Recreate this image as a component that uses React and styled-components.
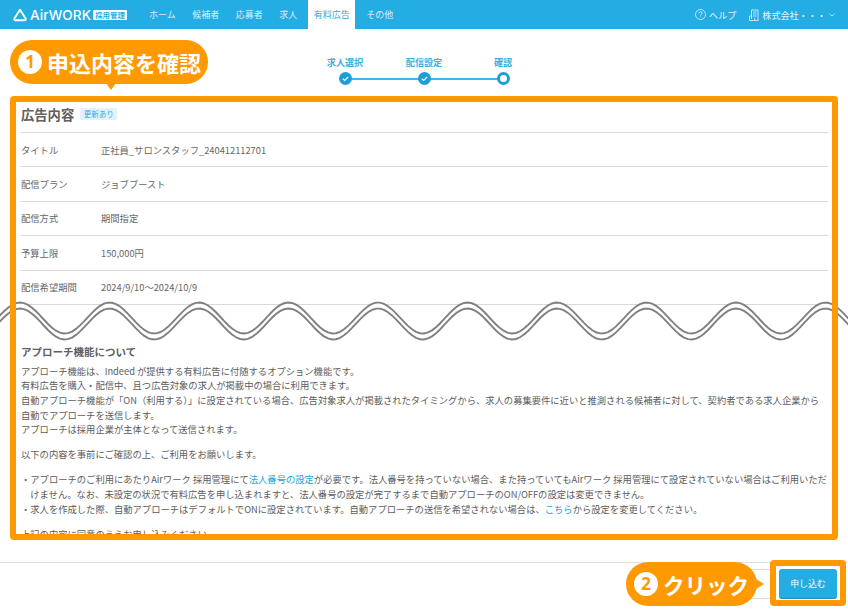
import React from "react";
import styled, { createGlobalStyle } from "styled-components";

const Global = createGlobalStyle`
  html, body { margin: 0; padding: 0; background: #fff; }
  * { box-sizing: border-box; }
  body { font-family: "Noto Sans CJK JP", "Noto Sans", sans-serif; color: #555; }
`;

const Page = styled.div`
  position: relative;
  width: 848px;
  height: 612px;
  overflow: hidden;
  display: flex;
  flex-direction: column;
  background: #fff;
`;

const Header = styled.header`
  height: 29px;
  flex: none;
  display: flex;
  align-items: stretch;
  background: #24ade3;
  color: #fff;
  font-size: 9px;
  padding: 0 13px;
`;
const Logo = styled.div`
  display: flex;
  align-items: center;
  gap: 3px;
  width: 130.5px;
`;
const LogoText = styled.span`
  font-family: Inter, "Liberation Sans", sans-serif;
  font-size: 13.6px;
  font-weight: 500;
  letter-spacing: 0.1px;
  width: 60px;
`;
const LogoBadge = styled.span`
  width: 34px;
  height: 10px;
  background: #fff;
  color: #24ade3;
  font-size: 7.4px;
  font-weight: 700;
  line-height: 10px;
  text-align: center;
  border-radius: 1px;
`;
const Nav = styled.nav`
  display: flex;
  gap: 5.5px;
`;
const NavItem = styled.a`
  display: flex;
  align-items: center;
  padding: 0 5.5px;
  background: ${(p) => (p.$active ? "#fff" : "transparent")};
  color: ${(p) => (p.$active ? "#24ade3" : "rgba(255,255,255,.82)")};
`;
const HeaderRight = styled.div`
  margin-left: auto;
  display: flex;
  align-items: center;
  font-size: 9.1px;
  color: rgba(255, 255, 255, 0.9);
`;
const HeaderLink = styled.span`
  display: flex;
  align-items: center;
  gap: 3px;
  margin-left: ${(p) => p.$gap || 0}px;
`;

const StepBar = styled.div`
  height: 67px;
  flex: none;
  display: flex;
  justify-content: center;
  align-items: flex-start;
  padding-top: 27px;
`;
const Step = styled.div`
  position: relative;
  width: 79px;
  display: flex;
  flex-direction: column;
  align-items: center;
  gap: 3px;
  &:not(:last-child)::after {
    content: "";
    position: absolute;
    left: 50%;
    width: 100%;
    bottom: 5.5px;
    height: 2px;
    background: #41b6e6;
  }
`;
const StepLabel = styled.span`
  font-size: 9.1px;
  line-height: 13px;
  font-weight: 700;
  color: #37b1e4;
`;
const StepDot = styled.span`
  position: relative;
  z-index: 1;
  width: 13px;
  height: 13px;
  border-radius: 50%;
  display: flex;
  align-items: center;
  justify-content: center;
  background: ${(p) => (p.$current ? "#fff" : "#1c9fd6")};
  border: ${(p) => (p.$current ? "3px solid #1c9fd6" : "none")};
`;

const Scroll = styled.main`
  height: 442px;
  flex: none;
  overflow: hidden;
`;
const Section = styled.section`
  padding: 0 20px 0 21px;
`;
const TitleRow = styled.div`
  height: 37px;
  display: flex;
  align-items: center;
  gap: 6px;
  border-bottom: 1px solid #d9d9d9;
`;
const Title = styled.h2`
  margin: 0;
  font-size: 13.3px;
  font-weight: 700;
  color: #606060;
`;
const UpdateTag = styled.span`
  height: 12px;
  padding: 0 3.5px;
  background: #e1f2fb;
  border-radius: 2px;
  color: #37a9dd;
  font-size: 7.5px;
  line-height: 12px;
`;
const Row = styled.div`
  height: 34.4px;
  display: flex;
  align-items: center;
  border-bottom: 1px solid #d9d9d9;
  font-size: 9.3px;
  color: #666;
`;
const RowLabel = styled.span`
  width: 80px;
  flex: none;
`;
const WaveBreak = styled.div`
  height: 43px;
  margin-top: -5px;
  position: relative;
`;
const WaveSvg = styled.svg`
  display: block;
`;
const Body = styled.div`
  padding: 0 20px 0 21px;
  font-size: 9.3px;
  line-height: 14.6px;
  color: #5c5c5c;
`;
const BodyTitle = styled.h3`
  margin: 1px 0 3.8px;
  font-size: 10.5px;
  line-height: 16px;
  font-weight: 700;
  color: #606060;
`;
const Para = styled.p`
  margin: 0 0 ${(p) => (p.$gap ? 10.5 : 0)}px;
`;
const BulletList = styled.div`
  margin-bottom: 11px;
`;
const Bullet = styled.p`
  margin: 0;
  padding-left: 9.3px;
  text-indent: -9.3px;
`;
const TextLink = styled.a`
  color: #1d9fd8;
`;

const Footer = styled.footer`
  margin-top: 24px;
  height: 50px;
  flex: none;
  border-top: 1px solid #e0e0e0;
  display: flex;
  justify-content: flex-end;
  align-items: center;
  padding: 0 11px 8px 0;
  gap: 8px;
`;
const GhostButton = styled.button`
  width: 58px;
  height: 30px;
  background: #fff;
  border: 1px solid #ddd;
  border-radius: 2px;
`;
const ApplyButton = styled.button`
  width: 58px;
  height: 30px;
  padding: 0;
  background: #24ade3;
  border: none;
  border-bottom: 1px solid #1a8fc0;
  border-radius: 3px;
  color: #fff;
  font: 400 8.9px "Noto Sans CJK JP", sans-serif;
`;

const Frame = styled.div`
  position: absolute;
  left: 10px;
  top: 96px;
  width: 828px;
  height: 444px;
  border: 6px solid #ff9900;
  border-radius: 4px;
  pointer-events: none;
`;
const ButtonFrame = styled.div`
  position: absolute;
  left: 770px;
  top: 560px;
  width: 76px;
  height: 46px;
  border: 6px solid #ff9900;
  border-radius: 4px;
  pointer-events: none;
`;
const Callout = styled.div`
  position: absolute;
  display: flex;
  align-items: center;
  height: 44px;
  border-radius: 22px;
  background: #ff9900;
  color: #fff;
  font-weight: 700;
  padding-left: 8px;
  left: ${(p) => p.$x}px;
  top: ${(p) => p.$y}px;
  width: ${(p) => p.$w}px;
`;
const CalloutTailDown = styled.span`
  position: absolute;
  left: 96px;
  bottom: -6px;
  border-left: 5px solid transparent;
  border-right: 5px solid transparent;
  border-top: 7px solid #ff9900;
`;
const CalloutTailRight = styled.span`
  position: absolute;
  right: -7px;
  top: 17px;
  border-top: 5px solid transparent;
  border-bottom: 5px solid transparent;
  border-left: 8px solid #ff9900;
`;
const CalloutNum = styled.span`
  width: 24px;
  height: 24px;
  flex: none;
  border-radius: 50%;
  background: #fff;
  color: #ff9900;
  font: 700 17px/24px "Noto Sans", sans-serif;
  text-align: center;
`;
const CalloutText = styled.span`
  font-size: ${(p) => p.$size}px;
  margin-left: 5px;
  white-space: nowrap;
`;

const wave = (offset) => {
  const pts = [];
  for (let x = -4; x <= 852; x += 4) {
    const y = 18 - 15.5 * Math.cos(((x - 20) * 2 * Math.PI) / 89.5) + offset;
    pts.push([x, y.toFixed(2)]);
  }
  return pts;
};
const toPath = (pts) => pts.map((p, i) => `${i ? "L" : "M"}${p[0]} ${p[1]}`).join(" ");
const top = wave(0);
const bottom = wave(6);
const bandPath = `${toPath(top)} ${toPath([...bottom].reverse()).replace("M", "L")} Z`;

const Check = () => (
  <svg width="9" height="9" viewBox="0 0 9 9" fill="none">
    <path d="M1.8 4.7 L3.7 6.4 L7.2 2.8" stroke="#fff" strokeWidth="1.2" />
  </svg>
);

const Steps = [
  ["求人選択", false],
  ["配信設定", false],
  ["確認", true],
];
const Rows = [
  ["タイトル", "正社員_サロンスタッフ_240412112701"],
  ["配信プラン", "ジョブブースト"],
  ["配信方式", "期間指定"],
  ["予算上限", "150,000円"],
  ["配信希望期間", "2024/9/10〜2024/10/9"],
];
const NavItems = ["ホーム", "候補者", "応募者", "求人", "有料広告", "その他"];

export default function App() {
  return (
    <Page>
      <Global />
      <Header>
        <Logo>
          <svg width="14" height="14" viewBox="0 0 14 14" fill="none">
            <path d="M7 1.8 L12.6 10.6 Q13.2 12.3 11.6 12.3 H2.4 Q0.8 12.3 1.4 10.6 Z" stroke="#fff" strokeWidth="1.9" strokeLinejoin="round" />
          </svg>
          <LogoText>AirWORK</LogoText>
          <LogoBadge>採用管理</LogoBadge>
        </Logo>
        <Nav>
          {NavItems.map((n) => (
            <NavItem key={n} $active={n === "有料広告"}>{n}</NavItem>
          ))}
        </Nav>
        <HeaderRight>
          <HeaderLink>
            <svg width="11" height="11" viewBox="0 0 11 11" fill="none" stroke="#fff" strokeWidth=".7">
              <circle cx="5.5" cy="5.5" r="5" />
              <path d="M3.9 4.2 Q4 2.8 5.5 2.8 Q7.1 2.8 7.1 4.1 Q7.1 4.9 6.2 5.4 Q5.5 5.8 5.5 6.6 M5.5 7.6 V8.4" />
            </svg>
            ヘルプ
          </HeaderLink>
          <HeaderLink $gap={13}>
            <svg width="10" height="12" viewBox="0 0 10 12" fill="none" stroke="#fff" strokeWidth=".7">
              <path d="M2.5 10 V1 H9 V11.5 M0.5 11.5 H9.5 M0.5 7 H2.5 M0.5 7 V11.5 M4 3 H7.5 M4 5 H7.5 M4 7 H7.5 M5.7 9 V11.5" />
            </svg>
            株式会社・・・
            <svg width="6" height="4" viewBox="0 0 6 4" fill="none" stroke="#fff" strokeWidth=".7">
              <path d="M.5 .7 L3 3 L5.5 .7" />
            </svg>
          </HeaderLink>
        </HeaderRight>
      </Header>

      <StepBar>
        {Steps.map(([label, cur]) => (
          <Step key={label}>
            <StepLabel>{label}</StepLabel>
            <StepDot $current={cur}>{!cur && <Check />}</StepDot>
          </Step>
        ))}
      </StepBar>

      <Scroll>
        <Section>
          <TitleRow>
            <Title>広告内容</Title>
            <UpdateTag>更新あり</UpdateTag>
          </TitleRow>
          {Rows.map(([k, v]) => (
            <Row key={k}>
              <RowLabel>{k}</RowLabel>
              <span>{v}</span>
            </Row>
          ))}
        </Section>
        <WaveBreak>
          <WaveSvg width="848" height="43" viewBox="0 0 848 43" fill="none">
            <path d={bandPath} fill="#fff" />
            <path d={toPath(top)} stroke="#808080" strokeWidth="1.9" />
            <path d={toPath(bottom)} stroke="#808080" strokeWidth="1.9" />
          </WaveSvg>
        </WaveBreak>
        <Body>
          <BodyTitle>アプローチ機能について</BodyTitle>
          <Para>アプローチ機能は、Indeed が提供する有料広告に付随するオプション機能です。</Para>
          <Para>有料広告を購入・配信中、且つ広告対象の求人が掲載中の場合に利用できます。</Para>
          <Para>自動アプローチ機能が「ON（利用する）」に設定されている場合、広告対象求人が掲載されたタイミングから、求人の募集要件に近いと推測される候補者に対して、契約者である求人企業から自動でアプローチを送信します。</Para>
          <Para $gap>アプローチは採用企業が主体となって送信されます。</Para>
          <Para $gap>以下の内容を事前にご確認の上、ご利用をお願いします。</Para>
          <BulletList>
            <Bullet>・アプローチのご利用にあたりAirワーク 採用管理にて<TextLink>法人番号の設定</TextLink>が必要です。法人番号を持っていない場合、また持っていてもAirワーク 採用管理にて設定されていない場合はご利用いただけません。なお、未設定の状況で有料広告を申し込まれますと、法人番号の設定が完了するまで自動アプローチのON/OFFの設定は変更できません。</Bullet>
            <Bullet>・求人を作成した際、自動アプローチはデフォルトでONに設定されています。自動アプローチの送信を希望されない場合は、<TextLink>こちら</TextLink>から設定を変更してください。</Bullet>
          </BulletList>
          <Para>上記の内容に同意のうえお申し込みください。</Para>
        </Body>
      </Scroll>

      <Footer>
        <GhostButton />
        <ApplyButton>申し込む</ApplyButton>
      </Footer>

      <Frame />
      <ButtonFrame />
      <Callout $x={10} $y={40} $w={198}>
        <CalloutNum>1</CalloutNum>
        <CalloutText $size={22}>申込内容を確認</CalloutText>
        <CalloutTailDown />
      </Callout>
      <Callout $x={626} $y={562} $w={131}>
        <CalloutNum>2</CalloutNum>
        <CalloutText $size={21.5}>クリック</CalloutText>
        <CalloutTailRight />
      </Callout>
    </Page>
  );
}
